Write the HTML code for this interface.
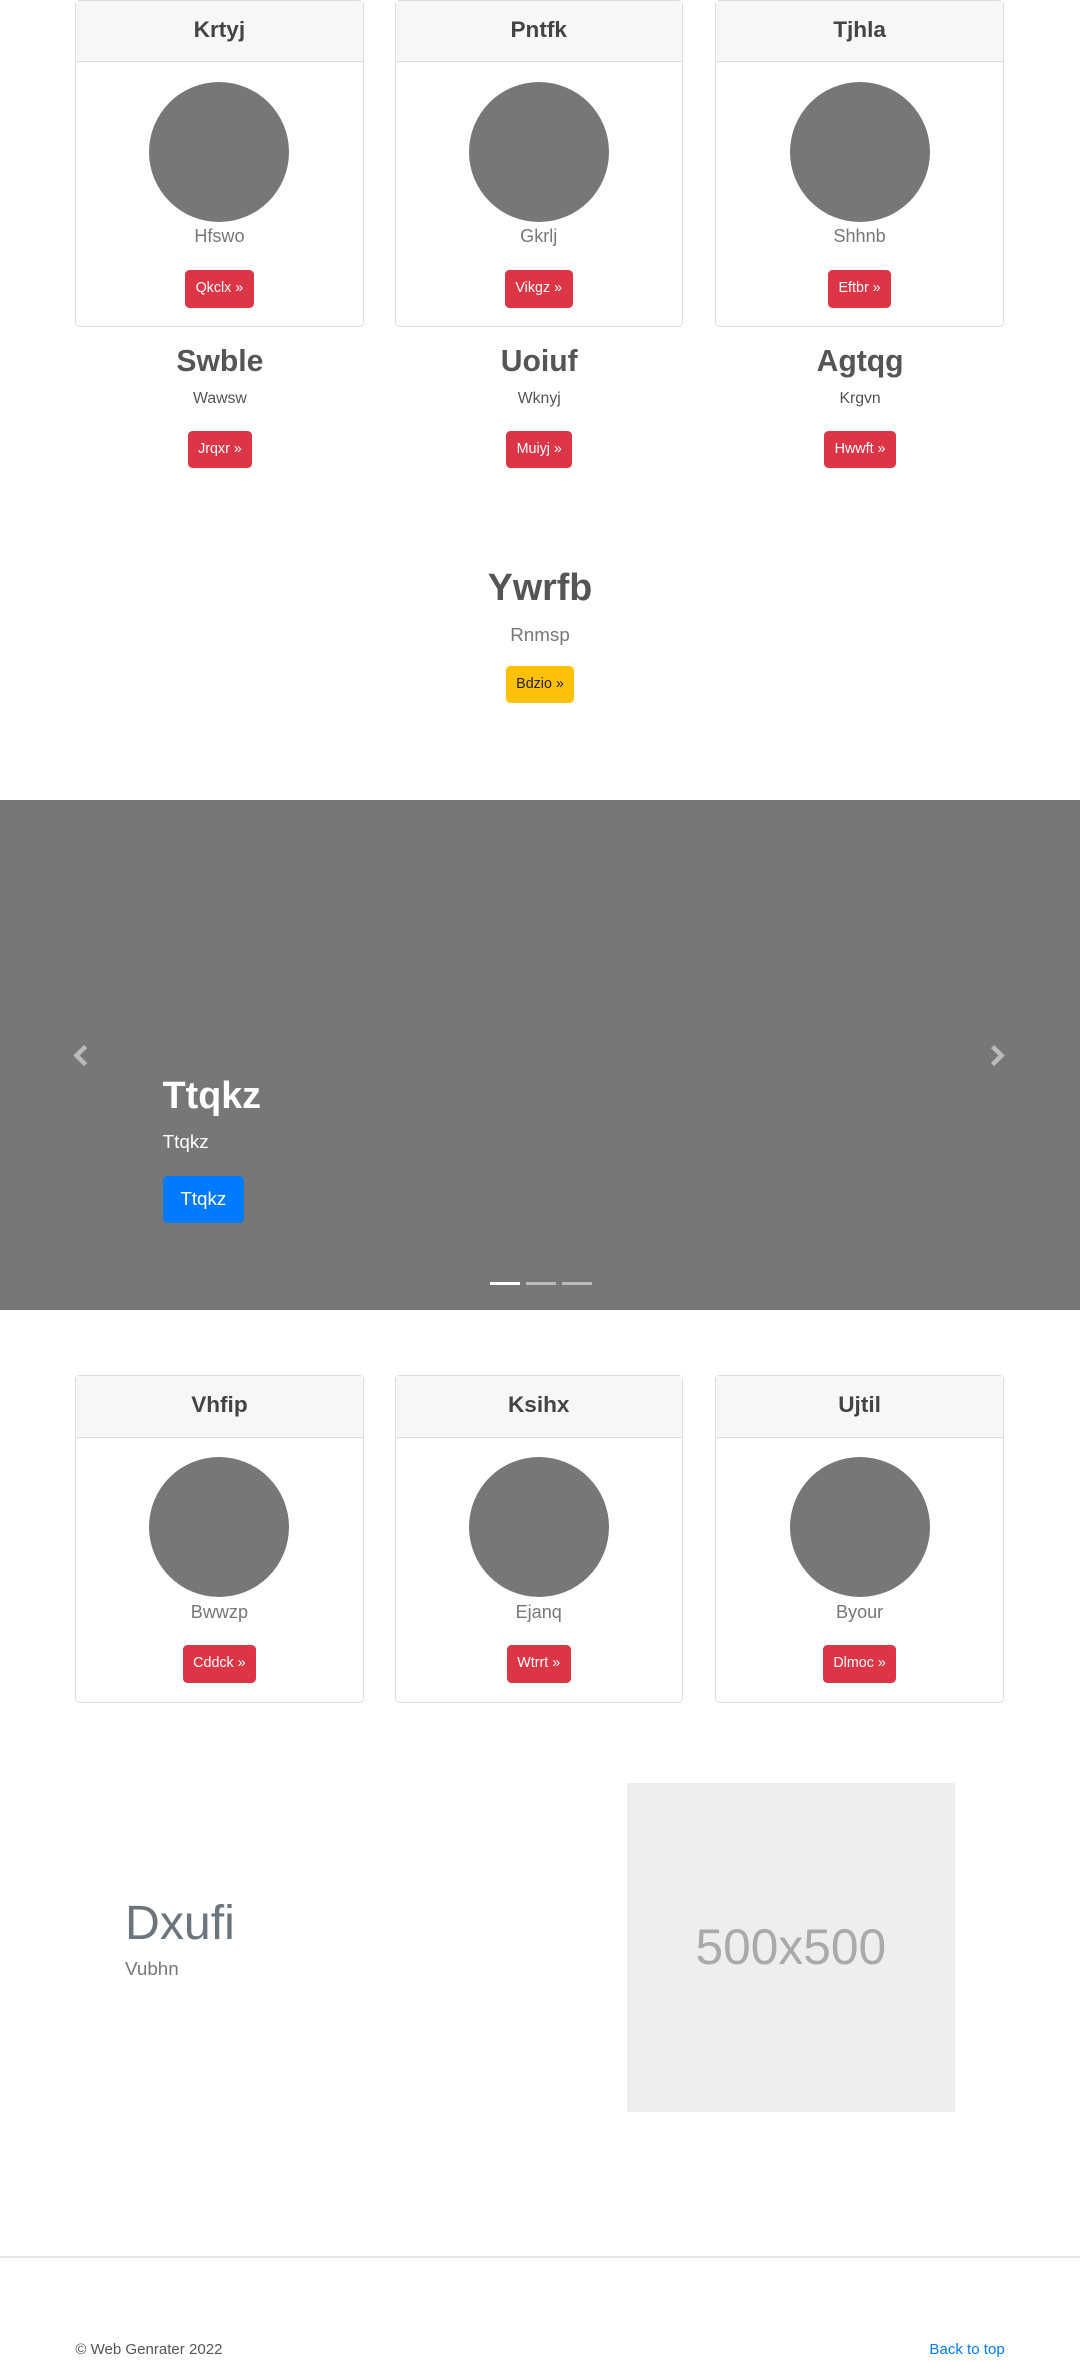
<!DOCTYPE html>
<html><head><meta charset="utf-8"><style>
html,body{margin:0;padding:0;background:#fff;}
body{width:1080px;height:2362px;overflow:hidden;}
#w{zoom:1.5063;width:717px;height:1568px;position:relative;font-family:"Liberation Sans",sans-serif;color:#555;}
.a{position:absolute;}
.card{position:absolute;width:190px;height:216px;border:1px solid #ddd;border-radius:3px;background:#fff;}
.card .h{height:40px;background:#f7f7f7;border-bottom:1px solid #ddd;text-align:center;font-size:15px;font-weight:bold;line-height:38px;color:#444;}
.card .c{width:93px;height:93px;border-radius:50%;background:#777;margin:13px auto 0;}
.card .t{text-align:center;font-size:12px;color:#777;margin-top:3px;}
.btn{display:inline-block;background:#dc3545;color:#fff;font-size:9.5px;border-radius:3px;line-height:25px;padding:0 7px;}
.ctr{text-align:center;}
.col{position:absolute;width:192px;text-align:center;}
</style></head><body><div id="w">

<div class="card" style="left:50px;top:0"><div class="h">Krtyj</div><div class="c"></div><div class="t">Hfswo</div><div class="ctr" style="margin-top:15px"><span class="btn">Qkclx »</span></div></div>
<div class="card" style="left:262px;top:0"><div class="h">Pntfk</div><div class="c"></div><div class="t">Gkrlj</div><div class="ctr" style="margin-top:15px"><span class="btn">Vikgz »</span></div></div>
<div class="card" style="left:475px;top:0"><div class="h">Tjhla</div><div class="c"></div><div class="t">Shhnb</div><div class="ctr" style="margin-top:15px"><span class="btn">Eftbr »</span></div></div>

<div class="col" style="left:50px;top:229px"><div style="font-size:20px;font-weight:bold;height:30px">Swble</div><div style="font-size:10.5px;height:27px">Wawsw</div><span class="btn">Jrqxr »</span></div>
<div class="col" style="left:262px;top:229px"><div style="font-size:20px;font-weight:bold;height:30px">Uoiuf</div><div style="font-size:10.5px;height:27px">Wknyj</div><span class="btn">Muiyj »</span></div>
<div class="col" style="left:475px;top:229px"><div style="font-size:20px;font-weight:bold;height:30px">Agtqg</div><div style="font-size:10.5px;height:27px">Krgvn</div><span class="btn">Hwwft »</span></div>

<div class="a" style="left:0;width:717px;top:376px;text-align:center"><div style="font-size:25px;font-weight:bold;height:38px">Ywrfb</div><div style="font-size:12.5px;color:#777;height:28px">Rnmsp</div><span class="btn" style="background:#ffc107;color:#222">Bdzio »</span></div>

<div class="a" style="left:0;top:531px;width:717px;height:339px;background:#777;">
<svg class="a" style="left:48px;top:163px" width="12" height="14" viewBox="0 0 12 14"><path d="M9 1L3 7l6 6" stroke="#bbb" stroke-width="3" fill="none"/></svg>
<svg class="a" style="left:656px;top:163px" width="12" height="14" viewBox="0 0 12 14"><path d="M3 1l6 6-6 6" stroke="#bbb" stroke-width="3" fill="none"/></svg>
<div class="a" style="left:108px;top:182px;color:#fff;font-size:25px;font-weight:bold">Ttqkz</div>
<div class="a" style="left:108px;top:220px;color:#fff;font-size:12.5px">Ttqkz</div>
<div class="a" style="left:108px;top:250px;width:54px;height:31px;background:#007bff;border-radius:3px;color:#fff;font-size:12.5px;line-height:31px;text-align:center">Ttqkz</div>
<div class="a" style="left:325px;top:320px;width:20px;height:2px;background:#fff"></div>
<div class="a" style="left:349px;top:320px;width:20px;height:2px;background:#bbb"></div>
<div class="a" style="left:373px;top:320px;width:20px;height:2px;background:#bbb"></div>
</div>

<div class="card" style="left:50px;top:913px"><div class="h">Vhfip</div><div class="c"></div><div class="t">Bwwzp</div><div class="ctr" style="margin-top:15px"><span class="btn">Cddck »</span></div></div>
<div class="card" style="left:262px;top:913px"><div class="h">Ksihx</div><div class="c"></div><div class="t">Ejanq</div><div class="ctr" style="margin-top:15px"><span class="btn">Wtrrt »</span></div></div>
<div class="card" style="left:475px;top:913px"><div class="h">Ujtil</div><div class="c"></div><div class="t">Byour</div><div class="ctr" style="margin-top:15px"><span class="btn">Dlmoc »</span></div></div>

<div class="a" style="left:83px;top:1258px;font-size:32px;color:#6c757d;font-weight:300">Dxufi</div>
<div class="a" style="left:83px;top:1300px;font-size:12.5px;color:#777">Vubhn</div>
<div class="a" style="left:416px;top:1184px;width:218px;height:218px;background:#eee;color:#aaa;font-size:33px;line-height:218px;text-align:center">500x500</div>

<div class="a" style="left:0;top:1498px;width:717px;height:1px;background:#e5e5e5"></div>
<div class="a" style="left:50px;top:1554px;font-size:10px;color:#555">© Web Genrater 2022</div>
<div class="a" style="right:50px;top:1554px;font-size:10px;color:#007bff">Back to top</div>

</div></body></html>
